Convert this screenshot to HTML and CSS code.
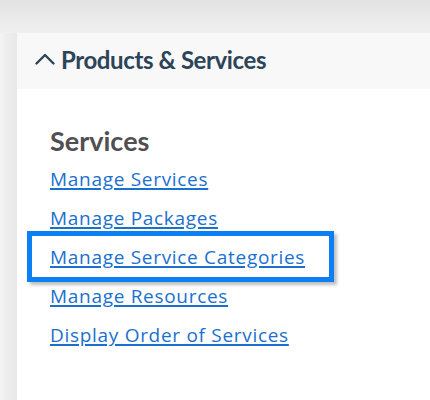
FILE: index.html
```html
<!DOCTYPE html>
<html lang="en">
<head>
<meta charset="utf-8">
<title>Products &amp; Services</title>
<link rel="stylesheet" href="styles.css">
</head>
<body>
<div class="topbar"></div>
<div class="page">
  <section class="card">
    <header class="card-header">
      <svg class="chevron" width="20" height="12" viewBox="0 0 20 12" aria-hidden="true">
        <path d="M1.5 10.5 L10 2 L18.5 10.5" fill="none" stroke="#2c4358" stroke-width="2.4" stroke-linecap="round" stroke-linejoin="round"/>
      </svg>
      <h2 class="card-title">Products &amp; Services</h2>
    </header>
    <div class="card-body">
      <h3 class="section-title">Services</h3>
      <ul class="link-list">
        <li class="link-item"><a href="#">Manage Services</a></li>
        <li class="link-item"><a href="#">Manage Packages</a></li>
        <li class="link-item highlight"><a href="#">Manage Service Categories</a></li>
        <li class="link-item"><a href="#">Manage Resources</a></li>
        <li class="link-item"><a href="#">Display Order of Services</a></li>
      </ul>
    </div>
  </section>
</div>
</body>
</html>
```
FILE: styles.css
```css
html, body {
  margin: 0;
  padding: 0;
}
body {
  width: 430px;
  height: 400px;
  overflow: hidden;
  background: linear-gradient(to right, #f4f4f4 0px, #eeeeee 6px, #e9e9e9 16px);
  font-family: "Lato", "Noto Sans", sans-serif;
}
.topbar {
  height: 33px;
  background: linear-gradient(to bottom, #e2e2e2 0%, #ebebeb 60%, #efefef 100%);
}
.page {
  padding-left: 17px;
}
.card {
  background: #ffffff;
  height: 367px;
}
.card-header {
  height: 56px;
  background: #f8f8f8;
  display: flex;
  align-items: center;
  gap: 6px;
  padding-left: 18px;
}
.chevron {
  display: block;
  margin-top: -5px;
}
.card-title {
  margin: 0 0 4px;
  font-family: "Lato", sans-serif;
  font-weight: 700;
  font-size: 24px;
  letter-spacing: -0.4px;
  color: #2c4358;
}
.card-body {
  padding: 37px 0 0 33px;
}
.section-title {
  margin: 0;
  font-family: "Lato", sans-serif;
  font-weight: 700;
  font-size: 27px;
  line-height: 30px;
  color: #505050;
}
.link-list {
  list-style: none;
  margin: 10px 0 0;
  padding: 0;
  display: flex;
  flex-direction: column;
  gap: 13px;
}
.link-item {
  font-family: "Open Sans", sans-serif;
  font-size: 19px;
  line-height: 26px;
  position: relative;
}
.link-item a {
  color: #1a70cf;
  letter-spacing: 0.7px;
  text-decoration: underline;
  text-decoration-thickness: 2px;
  text-underline-offset: 2px;
}
.highlight::before {
  content: "";
  position: absolute;
  left: -23px;
  top: -13px;
  width: 297px;
  height: 41px;
  border: 5px solid #0d7ff5;
  box-shadow: 3px 3px 3px rgba(0, 0, 0, 0.25);
  pointer-events: none;
}
```
